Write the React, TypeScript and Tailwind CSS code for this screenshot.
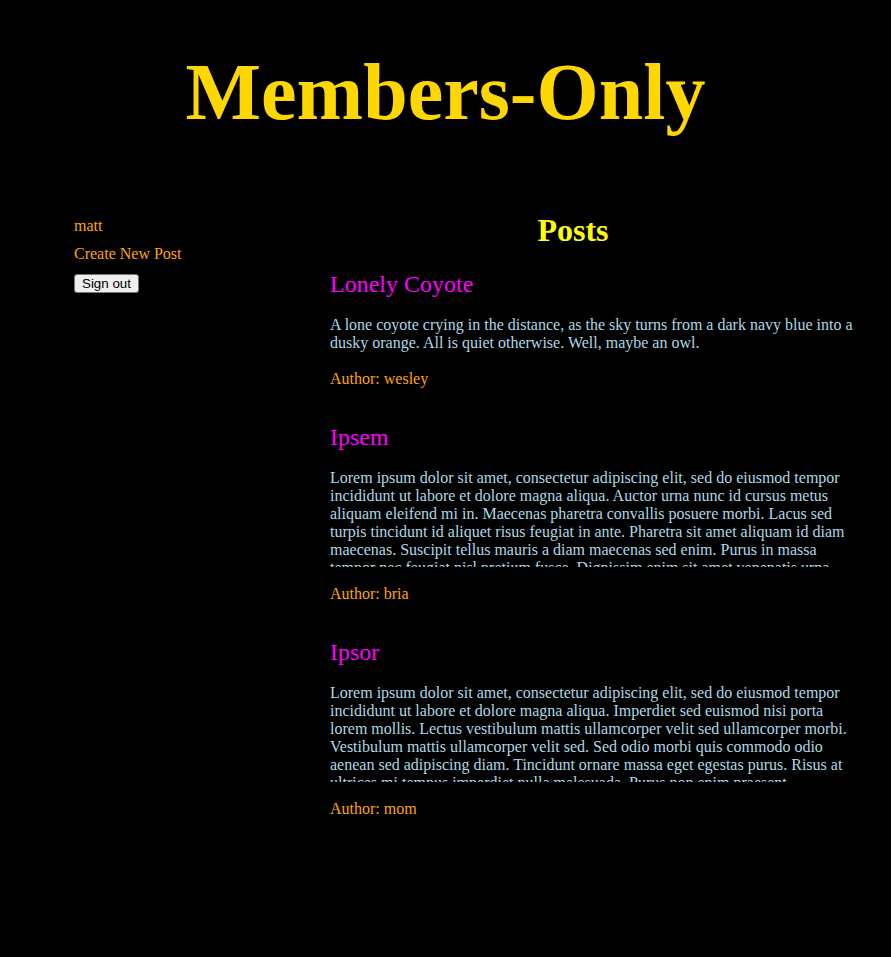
const POSTS = [
    {
        id: "post_1",
        title: "Lonely Coyote",
        body: "A lone coyote crying in the distance, as the sky turns from a dark navy blue into a dusky orange. All is quiet otherwise. Well, maybe an owl.",
        author: "wesley",
        clip: false
    },
    {
        id: "post_2",
        title: "Ipsem",
        body: "Lorem ipsum dolor sit amet, consectetur adipiscing elit, sed do eiusmod tempor incididunt ut labore et dolore magna aliqua. Auctor urna nunc id cursus metus aliquam eleifend mi in. Maecenas pharetra convallis posuere morbi. Lacus sed turpis tincidunt id aliquet risus feugiat in ante. Pharetra sit amet aliquam id diam maecenas. Suscipit tellus mauris a diam maecenas sed enim. Purus in massa tempor nec feugiat nisl pretium fusce. Dignissim enim sit amet venenatis urna cursus eget nunc scelerisque.",
        author: "bria",
        clip: true
    },
    {
        id: "post_3",
        title: "Ipsor",
        body: "Lorem ipsum dolor sit amet, consectetur adipiscing elit, sed do eiusmod tempor incididunt ut labore et dolore magna aliqua. Imperdiet sed euismod nisi porta lorem mollis. Lectus vestibulum mattis ullamcorper velit sed ullamcorper morbi. Vestibulum mattis ullamcorper velit sed. Sed odio morbi quis commodo odio aenean sed adipiscing diam. Tincidunt ornare massa eget egestas purus. Risus at ultrices mi tempus imperdiet nulla malesuada. Purus non enim praesent elementum facilisis leo vel fringilla.",
        author: "mom",
        clip: true
    }
];

export default function App() {
    return (
        <div className="bg-black min-h-[957px] w-full leading-[normal] font-['Liberation_Serif',serif] text-[16px]">
            <h1 className="pt-[47px] text-center text-[80px] font-bold text-[#ffd700]">Members-Only</h1>

            <div className="flex mt-[74px] pl-[74px] pr-[31px]">
                {/* sidebar */}
                <div className="w-[256px] shrink-0 flex flex-col items-start">
                    <a className="text-[#ffa500] mt-[5px]">matt</a>
                    <a className="text-[#ffa500] mt-[9.6px]">Create New Post</a>
                    <button className="mt-[11px] bg-[#efefef] border border-[#767676] rounded-[3px] px-[7px] py-[1px] text-[13.33px] text-black font-['Liberation_Sans',Arial,sans-serif]">
                        Sign out
                    </button>
                </div>

                {/* posts */}
                <div className="flex-1 flex flex-col">
                    <h2 className="pr-[44px] text-center text-[32px] font-bold text-[#ffff00]">Posts</h2>
                    {POSTS.map((post, i) => (
                        <div key={post.id} className={i === 0 ? "mt-[22px]" : "mt-[36px]"}>
                            <h3 className="text-[24px] text-[#ff00ff]">{post.title}</h3>
                            <p className={"mt-[18px] text-[#add8e6] " + (post.clip ? "h-[98px] overflow-hidden" : "")}>
                                {post.body}
                            </p>
                            <p className="mt-[18px] text-[#ffa500]">Author: {post.author}</p>
                        </div>
                    ))}
                </div>
            </div>
        </div>
    );
}
